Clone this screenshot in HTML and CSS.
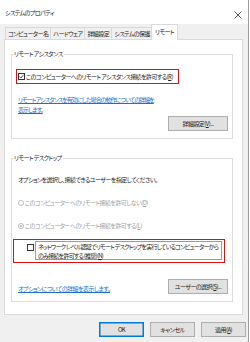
FILE: index.html
```html
<!DOCTYPE html>
<html lang="ja">
<head>
    <meta charset="UTF-8">
    <title>システムのプロパティ</title>
    <link rel="stylesheet" href="styles.css">
</head>
<body>
    <div class="window">
        <div class="titlebar">
            <span class="title">システムのプロパティ</span>
            <svg class="close" width="8" height="8" viewBox="0 0 8 8">
                <path d="M0.5 0.5 L7.5 7.5 M7.5 0.5 L0.5 7.5" stroke="#333" stroke-width="0.8" fill="none"/>
            </svg>
        </div>

        <div class="tabs">
            <div class="tab">コンピューター名</div>
            <div class="tab">ハードウェア</div>
            <div class="tab">詳細設定</div>
            <div class="tab">システムの保護</div>
            <div class="tab active">リモート</div>
        </div>

        <div class="panel">
            <!-- Remote Assistance -->
            <fieldset class="group">
                <legend>リモート アシスタンス</legend>
                <div class="check-row highlight">
                    <span class="checkbox">
                        <svg width="5" height="5" viewBox="0 0 5 5">
                            <path d="M0.4 2.6 L1.9 4 L4.6 0.8" stroke="#222" stroke-width="0.8" fill="none"/>
                        </svg>
                    </span>
                    <span>このコンピューターへのリモート アシスタンス接続を許可する(<u>R</u>)</span>
                </div>
                <a class="link link-assist" href="#">リモート アシスタンスを有効にした場合の動作についての詳細を<br>表示します。</a>
                <div class="btn-row">
                    <button class="btn btn-wide">詳細設定(<u>V</u>)...</button>
                </div>
            </fieldset>

            <!-- Remote Desktop -->
            <fieldset class="group group-desktop">
                <legend>リモート デスクトップ</legend>
                <p class="hint">オプションを選択し、接続できるユーザーを指定してください。</p>
                <div class="radio-row disabled">
                    <span class="radio"></span>
                    <span>このコンピューターへのリモート接続を許可しない(<u>D</u>)</span>
                </div>
                <div class="radio-row disabled">
                    <span class="radio checked"></span>
                    <span>このコンピューターへのリモート接続を許可する(<u>L</u>)</span>
                </div>
                <div class="nla-row highlight">
                    <span class="checkbox"></span>
                    <span class="nla-text">ネットワーク レベル認証でリモート デスクトップを実行しているコンピューターから<br>のみ接続を許可する (推奨)(<u>N</u>)</span>
                </div>
                <div class="link-row">
                    <a class="link" href="#">オプションについての詳細を表示します。</a>
                    <button class="btn btn-wide">ユーザーの選択(<u>S</u>)...</button>
                </div>
            </fieldset>
        </div>

        <div class="footer">
            <button class="btn btn-default">OK</button>
            <button class="btn">キャンセル</button>
            <button class="btn">適用(<u>A</u>)</button>
        </div>
    </div>
</body>
</html>
```

FILE: styles.css
```css
* {
    box-sizing: border-box;
}

body {
    margin: 0;
    font-family: "Noto Sans CJK JP", "Noto Sans", sans-serif;
    font-size: 6px;
    line-height: 10px;
    letter-spacing: -0.55px;
    font-feature-settings: "palt";
    color: #222;
    background: #fff;
    white-space: nowrap;
}

.window {
    width: 249px;
    height: 342px;
    background: #f0f0f0;
    border-right: 1px solid #a0a0a0;
    display: flex;
    flex-direction: column;
}

.titlebar {
    height: 24px;
    background: #fff;
    display: flex;
    align-items: center;
    justify-content: space-between;
    padding: 2px 6px 0 5px;
}

.close {
    margin-top: 3px;
}

/* Tab strip */
.tabs {
    height: 15px;
    display: flex;
    align-items: flex-end;
    padding-left: 5px;
}

.tab {
    height: 12px;
    padding: 0 2px;
    border: 1px solid #d9d9d9;
    border-bottom: none;
    margin-right: -1px;
    background: #f0f0f0;
    line-height: 11px;
}

.tab.active {
    height: 16px;
    margin-bottom: -1px;
    margin-left: -1px;
    padding: 1px 3px 0;
    background: #fff;
    position: relative;
    z-index: 1;
}

/* Tab page */
.panel {
    height: 276px;
    margin: 0 5px 0 4px;
    padding: 9px 9px 0 6px;
    background: #fff;
    border: 1px solid #d9d9d9;
}

.group {
    margin: 0;
    padding: 0 4px 7px 6px;
    border: 1px solid #dcdcdc;
    min-width: 0;
}

.group legend {
    margin-left: -5px;
    padding: 0 1px;
    line-height: 10px;
}

.group-desktop {
    margin-top: 14px;
}

.highlight {
    border: 1px solid #e01010;
}

.check-row {
    width: 163px;
    height: 15px;
    margin: 10px 0 0 -2px;
    padding-left: 1px;
    display: flex;
    align-items: center;
    gap: 1px;
}

.checkbox {
    width: 7px;
    height: 7px;
    flex-shrink: 0;
    border: 1px solid #333;
    background: #fff;
    display: flex;
    align-items: center;
    justify-content: center;
}

.link {
    display: block;
    color: #1a6fd0;
    text-decoration: underline;
}

.link-assist {
    margin-top: 11px;
    letter-spacing: -0.95px;
}

.btn-row {
    display: flex;
    justify-content: flex-end;
    margin-top: 1px;
}

.btn {
    height: 15px;
    width: 45px;
    padding: 0;
    font: inherit;
    line-height: 13px;
    letter-spacing: inherit;
    color: #222;
    background: #e1e1e1;
    border: 1px solid #adadad;
}

.btn-wide {
    width: 60px;
}

.btn-default {
    border-color: #0078d7;
    box-shadow: inset 0 0 0 0.5px #0078d7;
}

.hint {
    margin: 12px 0 0;
}

.radio-row {
    margin-top: 13px;
    display: flex;
    align-items: center;
    gap: 1px;
}

.radio-row.disabled {
    color: #a0a0a0;
}

.radio {
    width: 6px;
    height: 6px;
    border: 1px solid #bcbcbc;
    border-radius: 50%;
    background: #fff;
    display: flex;
    align-items: center;
    justify-content: center;
}

.radio.checked::after {
    content: "";
    width: 2px;
    height: 2px;
    border-radius: 50%;
    background: #b0b0b0;
}

.nla-row {
    width: 212px;
    height: 24px;
    margin: 8px 0 0 -5px;
    padding: 4px 0 0 13px;
    display: flex;
    align-items: flex-start;
    gap: 1px;
}

.nla-text {
    width: 187px;
    height: 19px;
    margin-top: -3px;
    padding: 0 2px;
    border: 1px solid #9a9a9a;
    line-height: 9px;
    letter-spacing: -0.75px;
}

.link-row {
    margin-top: 16px;
    display: flex;
    align-items: flex-end;
    justify-content: space-between;
}

/* Dialog buttons */
.footer {
    margin-top: 7px;
    padding-right: 2px;
    display: flex;
    justify-content: flex-end;
    gap: 6px;
}
```
